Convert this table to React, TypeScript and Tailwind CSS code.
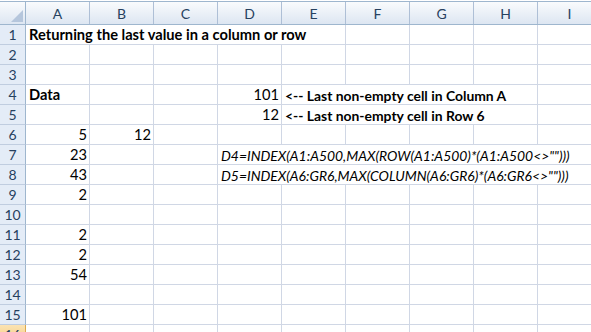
import React from "react";

type Cell = { t: string; al?: "l" | "r"; b?: boolean; i?: boolean; sm?: boolean };

const COLS = ["A", "B", "C", "D", "E", "F", "G", "H", "I"];

const data: Record<number, Record<string, Cell>> = {
  1: { A: { t: "Returning the last value in a column or row", b: true } },
  4: {
    A: { t: "Data", b: true },
    D: { t: "101", al: "r" },
    E: { t: "<-- Last non-empty cell in Column A", b: true, sm: true },
  },
  5: {
    D: { t: "12", al: "r" },
    E: { t: "<-- Last non-empty cell in Row 6", b: true, sm: true },
  },
  6: { A: { t: "5", al: "r" }, B: { t: "12", al: "r" } },
  7: {
    A: { t: "23", al: "r" },
    D: { t: 'D4=INDEX(A1:A500,MAX(ROW(A1:A500)*(A1:A500<>"")))', i: true, sm: true },
  },
  8: {
    A: { t: "43", al: "r" },
    D: { t: 'D5=INDEX(A6:GR6,MAX(COLUMN(A6:GR6)*(A6:GR6<>"")))', i: true, sm: true },
  },
  9: { A: { t: "2", al: "r" } },
  11: { A: { t: "2", al: "r" } },
  12: { A: { t: "2", al: "r" } },
  13: { A: { t: "54", al: "r" } },
  15: { A: { t: "101", al: "r" } },
};

const hidden: Record<number, string[]> = {
  1: ["A", "B", "C", "D"],
  4: ["E", "F", "G"],
  5: ["E", "F", "G"],
  7: ["D", "E", "F", "G", "H"],
  8: ["D", "E", "F", "G", "H"],
};

const font = { fontFamily: "Lato, 'Liberation Sans', sans-serif" };

function Row({ n }: { n: number }) {
  const cells = data[n] || {};
  const hid = hidden[n] || [];
  const sel = n === 16;
  return (
    <div className="flex h-[20px] shrink-0">
      <div
        className={
          "w-[26px] shrink-0 h-[20px] border-r border-b flex items-center justify-center text-[14px] text-[#27415f] " +
          (sel
            ? "bg-gradient-to-b from-[#fbe3b3] to-[#f5c977] border-[#d9a94e]"
            : "bg-[#e4ecf7] border-r-[#9eb6ce] border-b-[#c0cde0]")
        }
      >
        {n}
      </div>
      {COLS.map((c) => {
        const cell = cells[c];
        const hideR = hid.includes(c);
        return (
          <div
            key={c}
            className={
              "w-[64px] shrink-0 h-[20px] border-b border-[#d0d7e5] relative " +
              (hideR ? "" : "border-r")
            }
          >
            {cell && (
              <div
                className={
                  "absolute top-[1px] h-[19px] flex items-center whitespace-nowrap text-black leading-none " +
                  (cell.sm ? "text-[13.9px] " : "text-[14.67px] ") +
                  (cell.al === "r" ? "right-[2px]" : "left-[3px]") +
                  (cell.b ? " font-bold" : "") +
                  (cell.i ? " italic" : "")
                }
              >
                {cell.t}
              </div>
            )}
          </div>
        );
      })}
    </div>
  );
}

export default function App() {
  const rows = Array.from({ length: 16 }, (_, i) => i + 1);
  return (
    <div className="w-[591px] h-[332px] overflow-hidden bg-white" style={font}>
      <div className="h-[1px] bg-white" />
      <div className="flex h-[24px] border-t border-b border-[#9eb6ce] bg-gradient-to-b from-[#f9fbfd] to-[#dde6f2]">
        <div className="w-[26px] shrink-0 border-r border-[#9eb6ce] relative">
          <svg className="absolute right-[2px] bottom-[2px]" width="12" height="12" viewBox="0 0 12 12">
            <polygon points="12,0 12,12 0,12" fill="#b5c6dc" />
          </svg>
        </div>
        {COLS.map((c) => (
          <div
            key={c}
            className="w-[64px] shrink-0 border-r border-[#aebfd6] flex items-center justify-center text-[14px] text-[#27415f]"
          >
            {c}
          </div>
        ))}
      </div>
      {rows.map((n) => (
        <Row key={n} n={n} />
      ))}
    </div>
  );
}
